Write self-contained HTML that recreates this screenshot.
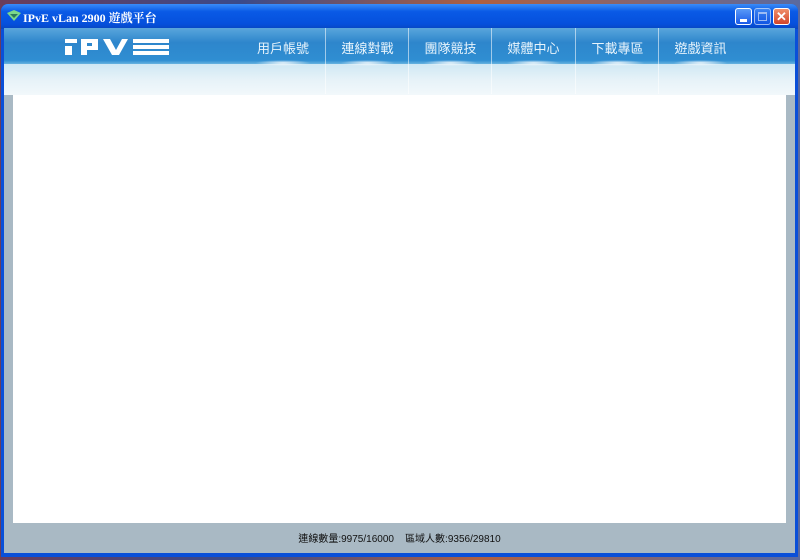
<!DOCTYPE html>
<html><head><meta charset="utf-8"><style>
*{margin:0;padding:0;box-sizing:border-box}
body{width:800px;height:560px;overflow:hidden;background:linear-gradient(90deg,#6b3d5a,#3a4a8a 30%,#b06040 60%,#5a6aa0);position:relative;font-family:"Liberation Sans","Noto Sans CJK TC",sans-serif}
.win{position:absolute;left:1px;top:4px;width:797px;height:553px;background:#0a4fd8;border-radius:7px 7px 0 0}
.title{position:absolute;left:0;top:0;width:100%;height:25px;border-radius:7px 7px 0 0;background:linear-gradient(#3a8cf8,#0a5ae6 30%,#0550dc 80%,#0846c0)}
.title span{position:absolute;left:22px;top:5px;color:#fff;font-family:"Liberation Serif","Noto Serif CJK SC",serif;font-weight:bold;font-size:12px}
.btn{position:absolute;top:4px;width:17px;height:17px;border:1px solid #fff;border-radius:3px;background:linear-gradient(#5a9af8,#1a5ae8)}
.inner{position:absolute;left:3px;top:24px;width:791px;height:525px;background:#a9b9c4}
.hdr{position:absolute;left:0;top:0;width:100%;height:36px;background:linear-gradient(#5aa6dc,#2e86cc 40%,#2f8ed2 90%,#68b4e0)}
.band{position:absolute;left:0;top:36px;width:100%;height:31px;background:linear-gradient(#cfe8f4,#e6f2f8 50%,#f2f8fb)}
.nav{position:absolute;top:0;height:66px;width:84px;border-left:1px solid rgba(255,255,255,.55);color:#e8f4fc;font-size:13px;text-align:center;padding-top:10px}
.nav:after{content:"";position:absolute;left:14px;right:14px;top:32px;height:6px;border-radius:50%;background:radial-gradient(rgba(255,255,255,.9),rgba(255,255,255,0) 70%)}
.content{position:absolute;left:9px;top:67px;width:773px;height:428px;background:#fff}
.status{position:absolute;left:0;top:502px;width:100%;text-align:center;font-size:10px;color:#111}
</style></head><body>
<div class="win">
 <div class="title">
  <svg style="position:absolute;left:6px;top:6px" width="14" height="12"><polygon points="0,3 7,0 14,3 7,11" fill="#7ad88a"/><polygon points="3,4 11,4 7,8" fill="#2a7a5a"/></svg>
  <span>IPvE vLan 2900 遊戲平台</span>
  <div class="btn" style="left:734px"><div style="position:absolute;left:4px;top:10px;width:7px;height:3px;background:#fff"></div></div>
  <div class="btn" style="left:753px;opacity:.6"><div style="position:absolute;left:3px;top:3px;width:9px;height:9px;border:1px solid #fff;border-top-width:2px"></div></div>
  <div class="btn" style="left:772px;background:linear-gradient(#f0906a,#d2452a);color:#fff;font-size:13px;line-height:15px;text-align:center;font-weight:bold">✕</div>
 </div>
 <div class="inner">
  <div class="hdr"></div>
  <div class="band"></div>
  <svg style="position:absolute;left:61px;top:11px" width="110" height="20">
   <g fill="#fff"><rect x="0" y="0" width="12" height="4"/><rect x="0" y="7" width="7" height="9"/>
   <path d="M16 0h17v11h-11v5h-6zM22 4v3h5v-3z" fill-rule="evenodd"/>
   <polygon points="38,0 45,0 51,11 57,0 63,0 54,16 47,16"/>
   <rect x="68" y="0" width="36" height="4"/><rect x="68" y="6" width="36" height="4"/><rect x="68" y="12" width="36" height="4"/></g>
  </svg>
  <div class="nav" style="left:237px;border-left:none">用戶帳號</div>
  <div class="nav" style="left:321px">連線對戰</div>
  <div class="nav" style="left:404px">團隊競技</div>
  <div class="nav" style="left:487px">媒體中心</div>
  <div class="nav" style="left:571px">下載專區</div>
  <div class="nav" style="left:654px">遊戲資訊</div>
  <div class="content"></div>
  <div class="status">連線數量:9975/16000&nbsp;&nbsp;&nbsp; 區域人數:9356/29810</div>
 </div>
</div>
</body></html>
